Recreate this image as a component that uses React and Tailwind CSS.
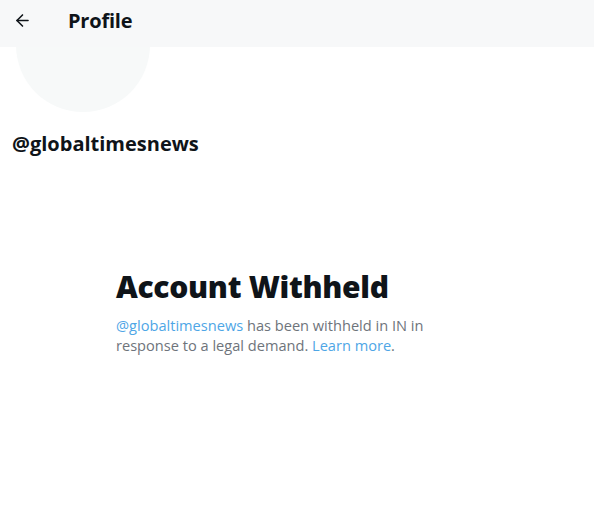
import { ArrowLeft } from "lucide-react";

export default function App() {
  return (
    <div
      className="relative h-[521px] w-[594px] overflow-hidden bg-white text-[#0f1419]"
      style={{ fontFamily: '"Open Sans", "Noto Sans", sans-serif' }}
    >
      <header className="relative z-10 flex h-[47px] items-center bg-[#f7f8f9]/95 pb-[6px]">
        <div className="flex w-[68px] items-center pl-[13px]">
          <ArrowLeft size={19} strokeWidth={2} className="text-[#0f1419]" />
        </div>
        <h1 className="text-[20px] font-bold leading-none tracking-[-0.2px]">Profile</h1>
      </header>

      <div className="-mt-[69px] ml-[16px] h-[134px] w-[134px] rounded-full bg-[#f7f9f9]" />

      <p className="mt-[19px] pl-[12px] text-[20px] font-bold leading-[26px]">
        @globaltimesnews
      </p>

      <section className="mt-[112px] pl-[116px]">
        <h2 className="text-[30px] font-extrabold leading-[36px] tracking-[-0.3px]">
          Account Withheld
        </h2>
        <p className="mt-[10px] w-[330px] text-[14.6px] leading-[20px] text-[#6e747b]">
          <span className="text-[#4ea6e6]">@globaltimesnews</span> has been withheld in IN in
          <br />
          response to a legal demand. <span className="text-[#4ea6e6]">Learn more</span>.
        </p>
      </section>
    </div>
  );
}
